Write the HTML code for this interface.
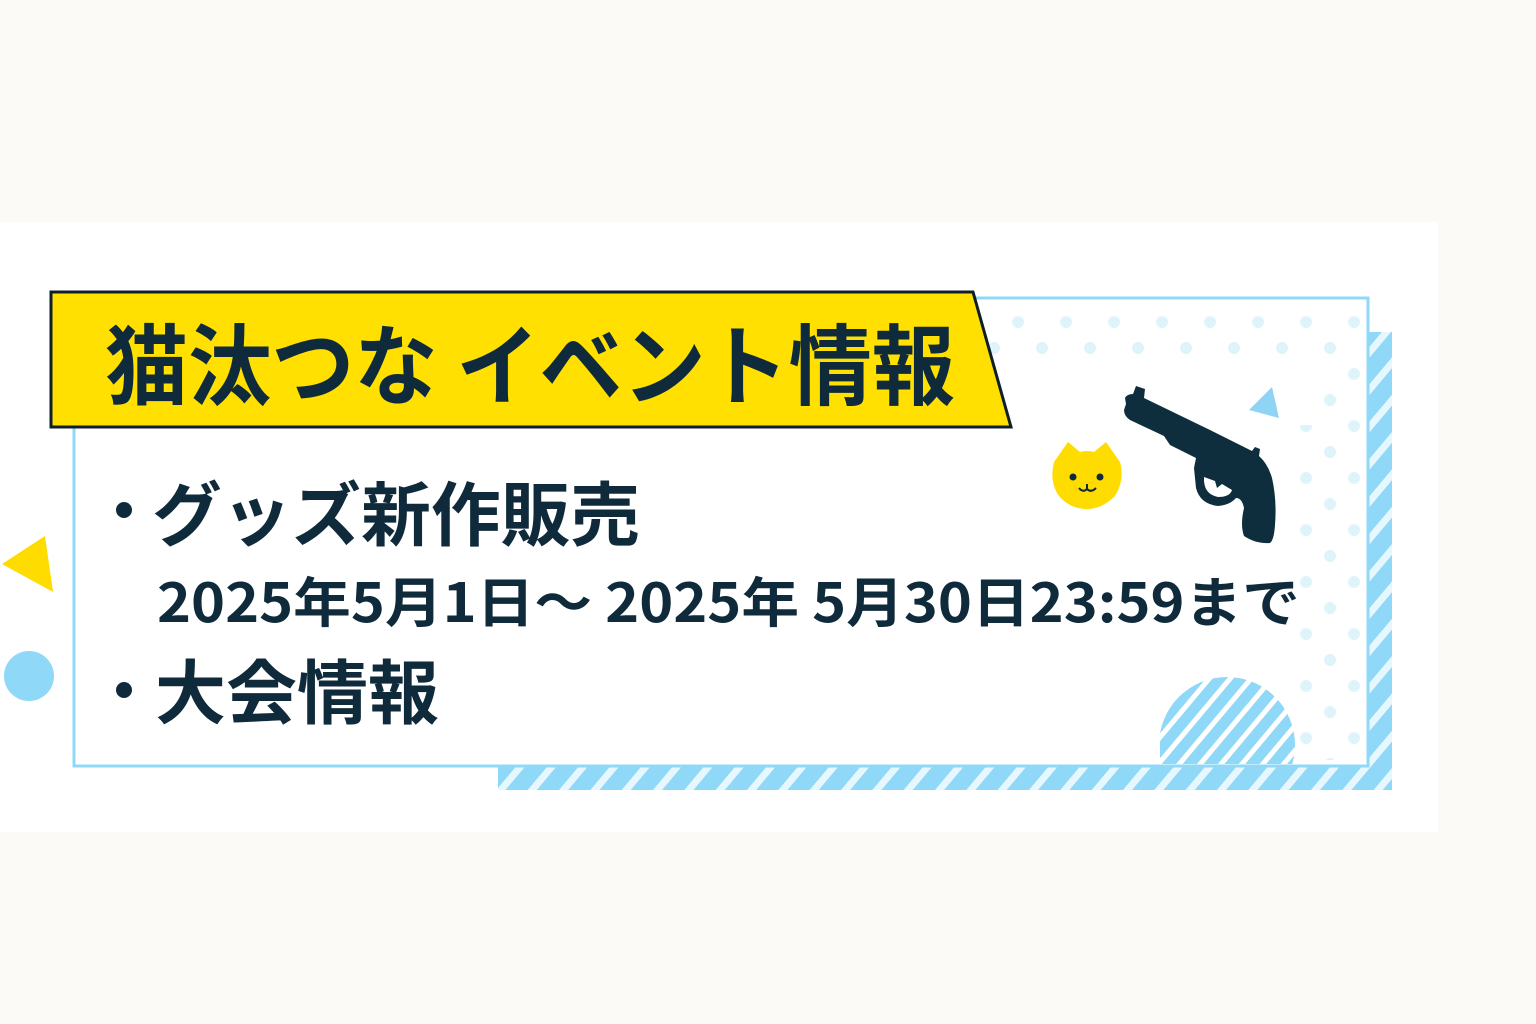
<!DOCTYPE html>
<html><head><meta charset="utf-8"><style>
html,body{margin:0;padding:0;background:#fbfaf7;}
svg{display:block}
text{font-family:"Noto Sans CJK JP","Liberation Sans",sans-serif;font-weight:700;fill:#0f2a3a}
</style></head><body>
<svg width="1536" height="1024" viewBox="0 0 1536 1024" xmlns="http://www.w3.org/2000/svg">
<defs>
<pattern id="st" patternUnits="userSpaceOnUse" width="24" height="24" patternTransform="rotate(40)">
<rect width="24" height="24" fill="#8fd8f8"/><rect width="7" height="24" fill="#e6f7fe"/>
</pattern>
<pattern id="st2" patternUnits="userSpaceOnUse" width="16" height="16" patternTransform="rotate(40)">
<rect width="16" height="16" fill="#8fd8f8"/><rect width="5" height="16" fill="#ffffff"/>
</pattern>
<pattern id="dots" patternUnits="userSpaceOnUse" x="996" y="309" width="48" height="52">
<circle cx="22" cy="13" r="6" fill="#dff3fb"/><circle cx="46" cy="39" r="6" fill="#dff3fb"/><circle cx="-2" cy="39" r="6" fill="#dff3fb"/>
</pattern>
<clipPath id="cl"><rect x="1160" y="660" width="150" height="104"/></clipPath>
</defs>
<rect x="0" y="222" width="1438" height="610" fill="#ffffff"/>
<rect x="498" y="764" width="894" height="26" fill="url(#st)"/>
<rect x="1369" y="332" width="23" height="458" fill="url(#st)"/>
<rect x="74" y="298" width="1294" height="468" fill="#ffffff" stroke="#8fd8f8" stroke-width="3"/>
<rect x="990" y="305" width="372" height="455" fill="url(#dots)"/>
<rect x="990" y="365" width="300" height="395" fill="#fff"/>
<rect x="1290" y="365" width="24" height="60" fill="#fff"/>
<circle cx="1227" cy="745" r="68" fill="url(#st2)" clip-path="url(#cl)"/>
<polygon points="51,292 973,292 1011,427 51,427" fill="#ffe000" stroke="#0f1f2a" stroke-width="3"/>
<text x="105" y="398" font-size="88" textLength="850" lengthAdjust="spacingAndGlyphs">猫汰つな イベント情報</text>
<polygon points="2,564 45,536 53,592" fill="#ffdc00"/>
<circle cx="29" cy="676" r="25" fill="#8fd8f8"/>
<polygon points="1249,410 1272,387 1279,418" fill="#8fd3f5"/>
<g>
<path d="M1054,462 L1068,442 L1080,452 Q1087,450 1094,452 L1106,442 L1120,462 Q1125,480 1115,496 Q1102,509 1087,509 Q1070,509 1059,496 Q1049,482 1054,462 Z" fill="#ffdc00"/>
<circle cx="1073" cy="477" r="3.5" fill="#0f2a3a"/><circle cx="1100" cy="477" r="3.5" fill="#0f2a3a"/>
<path d="M1079,488 Q1083,493 1087,489 Q1091,493 1096,488 M1087,484 L1087,489" stroke="#0f2a3a" stroke-width="2" fill="none"/>
</g>
<path d="M1136,386 L1145,389 L1144,398 L1210,430 L1252,451 L1255,447 L1260,449 L1259,456 Q1268,464 1272,478 Q1277,500 1275,525 Q1274,540 1270,543 Q1256,544 1244,536 Q1240,525 1244,508 Q1242,498 1236,498 Q1230,505 1218,506 Q1200,504 1196,488 L1194,468 L1196,458 L1170,445 L1164,436 L1130,420 Q1124,416 1124,410 L1126,404 L1125,398 Q1127,394 1133,394 Z" fill="#0f2e3d"/>
<path d="M1204,477 Q1203,494 1218,497 Q1230,497 1232,490 L1222,484 L1217,488 L1215,481 Z" fill="#fff"/>
<circle cx="124" cy="510" r="8" fill="#0f2a3a"/>
<text x="152" y="540" font-size="70" textLength="488" lengthAdjust="spacingAndGlyphs">グッズ新作販売</text>
<text x="157" y="622" font-size="54" textLength="1143" lengthAdjust="spacingAndGlyphs">2025年5月1日～ 2025年 5月30日23:59まで</text>
<circle cx="124" cy="690" r="8" fill="#0f2a3a"/>
<text x="155" y="718" font-size="70" textLength="284" lengthAdjust="spacingAndGlyphs">大会情報</text>
</svg>
</body></html>
